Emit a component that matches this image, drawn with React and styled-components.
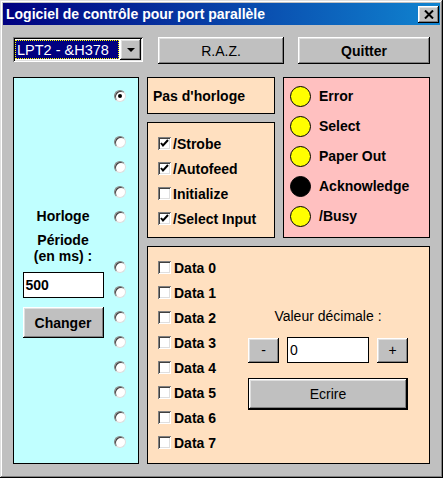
import styled, { createGlobalStyle } from "styled-components";

const GlobalStyle = createGlobalStyle`
  html, body {
    margin: 0;
    padding: 0;
    background: #c0c0c0;
  }
  * {
    box-sizing: border-box;
  }
`;

const raised = `
  background: #c0c0c0;
  box-shadow: inset -1px -1px #000, inset 1px 1px #fff,
    inset -2px -2px #808080, inset 2px 2px #dfdfdf;
`;

const Window = styled.div`
  width: 443px;
  height: 478px;
  padding: 3px;
  display: flex;
  flex-direction: column;
  background: #c0c0c0;
  box-shadow: inset -1px -1px #000, inset 1px 1px #dfdfdf,
    inset -2px -2px #808080, inset 2px 2px #fff;
  font-family: "Liberation Sans", Arial, sans-serif;
  color: #000;
`;

const TitleBar = styled.div`
  height: 22px;
  display: flex;
  align-items: center;
  justify-content: space-between;
  padding: 0 1px 0 3px;
  background: linear-gradient(90deg, #000080, #1084d0);
`;

const Title = styled.span`
  color: #fff;
  font-weight: bold;
  font-size: 14px;
`;

const CloseButton = styled.div`
  ${raised}
  width: 21px;
  height: 17px;
  display: flex;
  align-items: center;
  justify-content: center;
`;

const Toolbar = styled.div`
  display: flex;
  align-items: flex-start;
  margin: 12px 0 0 10px;
`;

const Combo = styled.div`
  width: 130px;
  height: 25px;
  padding: 2px;
  display: flex;
  background: #fff;
  box-shadow: inset 1px 1px #808080, inset -1px -1px #fff,
    inset 2px 2px #000, inset -2px -2px #dfdfdf;
`;

const ComboValue = styled.div`
  flex: 1;
  margin: 1px 1px 1px 0;
  padding-left: 1px;
  display: flex;
  align-items: center;
  background: #000080;
  border: 1px dotted #ffff00;
  color: #fff;
  font-size: 14.5px;
  white-space: nowrap;
  overflow: hidden;
`;

const ComboArrow = styled.div`
  ${raised}
  width: 21px;
  height: 21px;
  display: flex;
  align-items: center;
  justify-content: center;
`;

const Button = styled.div`
  ${raised}
  width: ${(p) => p.$w}px;
  height: ${(p) => p.$h}px;
  margin-left: ${(p) => p.$ml || 0}px;
  display: flex;
  align-items: center;
  justify-content: center;
  font-size: 14px;
  font-weight: ${(p) => (p.$bold ? "bold" : "normal")};
  ${(p) =>
    p.$default &&
    `box-shadow: inset 0 0 0 1px #000, inset -2px -2px #000, inset 2px 2px #fff,
      inset -3px -3px #808080, inset 3px 3px #dfdfdf;`}
`;

const Grid = styled.div`
  margin: 13px 0 0 10px;
  display: grid;
  grid-template-columns: 126px 128px 147px;
  grid-template-rows: 37px 116px 218px;
  column-gap: 8px;
  row-gap: 8px;
`;

const Panel = styled.div`
  border: 1px solid #000;
  background: #ffe0c0;
  font-size: 14px;
  font-weight: bold;
`;

const ClockPanel = styled(Panel)`
  grid-row: 1 / 4;
  background: #c0ffff;
  display: grid;
  grid-template-columns: 98px 12px;
  column-gap: 2px;
`;

const ClockForm = styled.div`
  padding-top: 130px;
  display: flex;
  flex-direction: column;
  align-items: center;
  line-height: 16px;
`;

const FormLabel = styled.div`
  margin-top: ${(p) => p.$mt || 0}px;
  text-align: center;
`;

const TextBox = styled.div`
  width: ${(p) => p.$w}px;
  height: 26px;
  margin-top: ${(p) => p.$mt || 0}px;
  padding-left: 2px;
  display: flex;
  align-items: center;
  background: #fff;
  border: 1px solid #000;
  font-size: 14px;
  font-weight: ${(p) => (p.$bold ? "bold" : "normal")};
`;

const RadioColumn = styled.div`
  padding-top: 12px;
  display: flex;
  flex-direction: column;
  gap: 13px;
`;

const Radio = styled.div`
  width: 12px;
  height: 12px;
  border-radius: 50%;
  background: #fff;
  border: 1px solid;
  border-color: #808080 #dfdfdf #dfdfdf #808080;
  box-shadow: inset 1px 1px 0 #404040;
  display: flex;
  align-items: center;
  justify-content: center;
  visibility: ${(p) => (p.$hidden ? "hidden" : "visible")};
  margin-bottom: ${(p) => (p.$first ? 21 : 0)}px;

  &::after {
    content: "";
    width: 4px;
    height: 4px;
    border-radius: 50%;
    background: ${(p) => (p.$checked ? "#000" : "transparent")};
  }
`;

const StepPanel = styled(Panel)`
  display: flex;
  align-items: center;
  padding-left: 5px;
`;

const ControlPanel = styled(Panel)`
  padding: 8px 0 0 10px;
`;

const CheckRow = styled.div`
  height: 25px;
  display: flex;
  align-items: center;
  gap: ${(p) => p.$gap || 2}px;
`;

const Box = styled.div`
  width: 13px;
  height: 13px;
  flex: none;
  background: #fff;
  box-shadow: inset 1px 1px #808080, inset -1px -1px #fff,
    inset 2px 2px #404040, inset -2px -2px #dfdfdf;
  display: flex;
  align-items: center;
  justify-content: center;
`;

const StatusPanel = styled(Panel)`
  grid-column: 3;
  grid-row: 1 / 3;
  background: #ffc0c0;
  padding: 3px 0 0 6px;
`;

const StatusRow = styled.div`
  height: 30px;
  display: flex;
  align-items: center;
  gap: 8px;
`;

const Led = styled.div`
  width: 21px;
  height: 21px;
  border-radius: 50%;
  border: 1px solid #000;
  background: ${(p) => (p.$on ? "#000" : "#ffff00")};
`;

const DataPanel = styled(Panel)`
  grid-column: 2 / 4;
  display: grid;
  grid-template-columns: 90px 160px;
  align-items: start;
  padding: 8px 10px;
`;

const DataList = styled.div`
  display: flex;
  flex-direction: column;
`;

const ValueArea = styled.div`
  padding-top: 53px;
  display: flex;
  flex-direction: column;
  align-items: center;
  font-weight: normal;
  line-height: 16px;
`;

const StepRow = styled.div`
  width: 160px;
  margin-top: 13px;
  display: flex;
  align-items: center;
  justify-content: space-between;
`;

const Check = ({ checked }) => (
  <Box>
    {checked && (
      <svg width="9" height="9" viewBox="0 0 9 9">
        <path d="M1 4 L3 6.5 L8 1" fill="none" stroke="#000" strokeWidth="2" />
      </svg>
    )}
  </Box>
);

const controls = [
  ["/Strobe", true],
  ["/Autofeed", true],
  ["Initialize", false],
  ["/Select Input", true],
];

const status = [
  ["Error", false],
  ["Select", false],
  ["Paper Out", false],
  ["Acknowledge", true],
  ["/Busy", false],
];

// slot 5 sits under the "Période" label
const radios = Array.from({ length: 14 }, (_, i) => i);

function App() {
  return (
    <>
      <GlobalStyle />
      <Window>
        <TitleBar>
          <Title>Logiciel de contrôle pour port parallèle</Title>
          <CloseButton>
            <svg width="10" height="9" viewBox="0 0 10 9">
              <path d="M1 0.5 L9 8.5 M9 0.5 L1 8.5" stroke="#000" strokeWidth="2" />
            </svg>
          </CloseButton>
        </TitleBar>

        <Toolbar>
          <Combo>
            <ComboValue>LPT2 - &amp;H378</ComboValue>
            <ComboArrow>
              <svg width="8" height="4" viewBox="0 0 8 4">
                <path d="M0 0 H8 L4 4 Z" fill="#000" />
              </svg>
            </ComboArrow>
          </Combo>
          <Button $w={126} $h={27} $ml={15}>R.A.Z.</Button>
          <Button $w={132} $h={27} $ml={14} $bold>Quitter</Button>
        </Toolbar>

        <Grid>
          <ClockPanel>
            <ClockForm>
              <FormLabel>Horloge</FormLabel>
              <FormLabel $mt={8}>Période</FormLabel>
              <FormLabel>(en ms) :</FormLabel>
              <TextBox $w={81} $mt={8} $bold>500</TextBox>
              <Button $w={81} $h={31} style={{ marginTop: 9 }} $bold>
                Changer
              </Button>
            </ClockForm>
            <RadioColumn>
              {radios.map((i) => (
                <Radio key={i} $first={i === 0} $checked={i === 0} $hidden={i === 5} />
              ))}
            </RadioColumn>
          </ClockPanel>

          <StepPanel>Pas d'horloge</StepPanel>

          <StatusPanel>
            {status.map(([label, on]) => (
              <StatusRow key={label}>
                <Led $on={on} />
                {label}
              </StatusRow>
            ))}
          </StatusPanel>

          <ControlPanel>
            {controls.map(([label, checked]) => (
              <CheckRow key={label}>
                <Check checked={checked} />
                {label}
              </CheckRow>
            ))}
          </ControlPanel>

          <DataPanel>
            <DataList>
              {Array.from({ length: 8 }, (_, i) => (
                <CheckRow key={i} $gap={3}>
                  <Check />
                  Data {i}
                </CheckRow>
              ))}
            </DataList>
            <ValueArea>
              Valeur décimale :
              <StepRow>
                <Button $w={31} $h={25}>-</Button>
                <TextBox $w={82}>0</TextBox>
                <Button $w={31} $h={25}>+</Button>
              </StepRow>
              <Button $w={160} $h={32} $default style={{ marginTop: 15 }}>
                Ecrire
              </Button>
            </ValueArea>
          </DataPanel>
        </Grid>
      </Window>
    </>
  );
}

export default App;
